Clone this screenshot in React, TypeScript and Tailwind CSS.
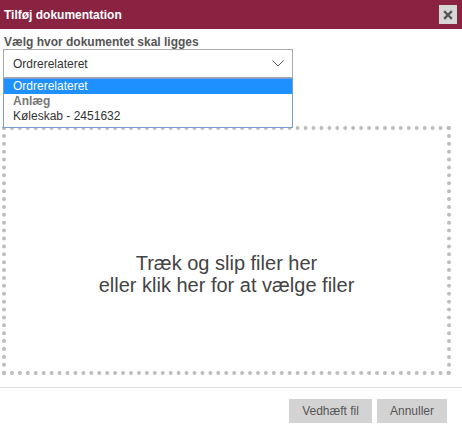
import React from 'react';

const App: React.FC = () => {
  return (
    <div className="w-[462px] h-[430px] bg-white font-['Liberation_Sans',Arial,sans-serif] text-[#333]">
      <header className="h-[29px] bg-[#8a2342] flex items-center justify-between pl-[4px] pr-[5px]">
        <h1 className="text-[12px] font-bold text-white leading-none">Tilføj dokumentation</h1>
        <button className="w-[18px] h-[19px] bg-[#d6d6d6] flex items-center justify-center">
          <svg width="10" height="10" viewBox="0 0 10 10">
            <path d="M2 2 L8 8 M8 2 L2 8" stroke="#555" strokeWidth="2.4" strokeLinecap="square" />
          </svg>
        </button>
      </header>

      <div>
        <label className="block mt-[6px] ml-[4px] text-[12px] leading-[14px] font-bold text-[#555]">
          Vælg hvor dokumentet skal ligges
        </label>

        <div className="relative ml-[3px] w-[290px] z-10">
          <div className="h-[29px] border border-[#a9a9a9] bg-white flex items-center justify-between pl-[9px] pr-[8px]">
            <span className="text-[12px] text-[#333]">Ordrerelateret</span>
            <svg width="12" height="7" viewBox="0 0 12 7">
              <polyline points="0.5,0.5 6,6 11.5,0.5" fill="none" stroke="#555" strokeWidth="1" />
            </svg>
          </div>
          <ul className="absolute top-full left-0 w-full border border-[#7a9cd3] bg-white pb-[3px] text-[12px] leading-[15px]">
            <li className="bg-[#1e90ff] text-white pl-[9px] h-[15px]">Ordrerelateret</li>
            <li className="font-bold text-[#777] pl-[9px] h-[15px]">Anlæg</li>
            <li className="text-[#333] pl-[9px] h-[15px]">Køleskab - 2451632</li>
          </ul>
        </div>

        <div className="mt-[48px] ml-[2px] w-[449px] h-[249px] border-4 border-dotted border-[#bdbdbd] flex flex-col items-center justify-center pt-[46px] text-[20px] leading-[22px] text-[#444]">
          <p>Træk og slip filer her</p>
          <p>eller klik her for at vælge filer</p>
        </div>

        <div className="mt-[12px] border-t border-[#ddd] flex justify-end gap-[5px] pt-[11px] pr-[15px]">
          <button className="w-[83px] h-[24px] bg-[#d3d3d3] text-[12px] text-[#555]">Vedhæft fil</button>
          <button className="w-[70px] h-[24px] bg-[#d3d3d3] text-[12px] text-[#555]">Annuller</button>
        </div>
      </div>
    </div>
  );
};

export default App;
